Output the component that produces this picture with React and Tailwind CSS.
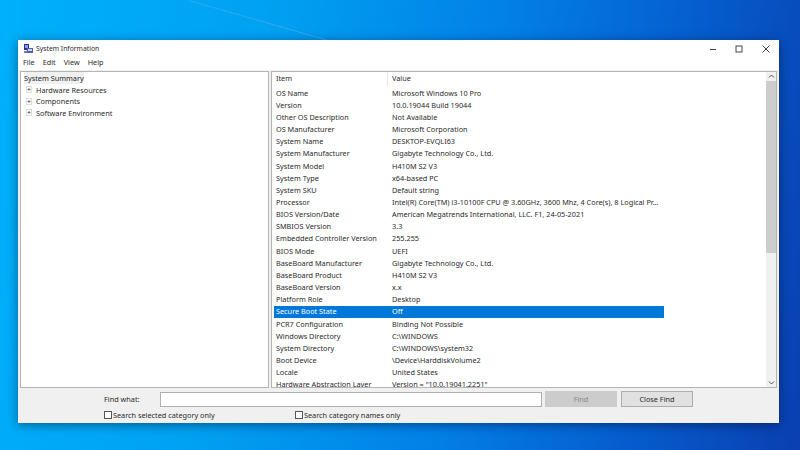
import React from "react";

const rows = [
  ["OS Name", "Microsoft Windows 10 Pro"],
  ["Version", "10.0.19044 Build 19044"],
  ["Other OS Description", "Not Available"],
  ["OS Manufacturer", "Microsoft Corporation"],
  ["System Name", "DESKTOP-EVQLI63"],
  ["System Manufacturer", "Gigabyte Technology Co., Ltd."],
  ["System Model", "H410M S2 V3"],
  ["System Type", "x64-based PC"],
  ["System SKU", "Default string"],
  ["Processor", "Intel(R) Core(TM) i3-10100F CPU @ 3.60GHz, 3600 Mhz, 4 Core(s), 8 Logical Pr..."],
  ["BIOS Version/Date", "American Megatrends International, LLC. F1, 24-05-2021"],
  ["SMBIOS Version", "3.3"],
  ["Embedded Controller Version", "255.255"],
  ["BIOS Mode", "UEFI"],
  ["BaseBoard Manufacturer", "Gigabyte Technology Co., Ltd."],
  ["BaseBoard Product", "H410M S2 V3"],
  ["BaseBoard Version", "x.x"],
  ["Platform Role", "Desktop"],
  ["Secure Boot State", "Off"],
  ["PCR7 Configuration", "Binding Not Possible"],
  ["Windows Directory", "C:\\WINDOWS"],
  ["System Directory", "C:\\WINDOWS\\system32"],
  ["Boot Device", "\\Device\\HarddiskVolume2"],
  ["Locale", "United States"],
  ["Hardware Abstraction Layer", 'Version = "10.0.19041.2251"'],
];

function Plus() {
  return (
    <svg width="6" height="7" viewBox="0 0 6 7" className="shrink-0">
      <rect x="0.5" y="0.5" width="5" height="6" fill="#fff" stroke="#b8b8b8" strokeDasharray="1 1" />
      <path d="M1.5 3.5H4.5M3 2V5" stroke="#777" />
    </svg>
  );
}

function Logo() {
  return (
    <svg width="9" height="10" viewBox="0 0 9 10" className="shrink-0">
      <rect x="0" y="0" width="5" height="6" fill="#27358f" />
      <rect x="1" y="1" width="3" height="3" fill="#8f9ddc" />
      <rect x="3" y="4" width="6" height="5" fill="#4f5fb8" />
      <rect x="4" y="5" width="4" height="2" fill="#cfd6f2" />
      <rect x="0" y="7" width="3" height="2" fill="#7a7a9a" />
    </svg>
  );
}

function Check({ label }) {
  return (
    <div className="flex items-center gap-[1px] whitespace-nowrap">
      <div className="w-[8px] h-[8px] border border-[#555] bg-white" />
      <span>{label}</span>
    </div>
  );
}

export default function App() {
  return (
    <div
      className="relative w-[800px] h-[450px] overflow-hidden pt-[40px] pl-[18px] text-[7.3px] leading-[12px] text-[#2a2a2a]"
      style={{ fontFamily: '"Noto Sans", "Open Sans", sans-serif' }}
    >
      <div className="absolute inset-0 bg-[linear-gradient(100deg,#00b0fa_0%,#00a2f2_30%,#0280e6_58%,#0560d0_78%,#0a3fb0_100%)]" />
      <div className="absolute left-[189px] top-0 w-[143px] h-[1px] bg-[#2fa8ee] rotate-[16deg] origin-left" />

      <div className="relative w-[761px] h-[383px] bg-[#f0f0f0] flex flex-col shadow-[0_2px_10px_rgba(0,0,40,0.45)]">
        <div className="bg-white h-[30px] shrink-0 flex flex-col">
          <div className="h-[16px] flex items-center pl-[6px] pt-[1px]">
            <Logo />
            <span className="ml-[3px] text-[6.8px]">System Information</span>
            <div className="ml-auto flex items-center">
              <svg width="10" height="10" viewBox="0 0 10 10" className="mr-[16px]">
                <path d="M2 5.5H8" stroke="#444" strokeWidth="1" />
              </svg>
              <svg width="10" height="10" viewBox="0 0 10 10" className="mr-[17px]">
                <rect x="2" y="2" width="6" height="6" fill="none" stroke="#444" strokeWidth="1" />
              </svg>
              <svg width="10" height="10" viewBox="0 0 10 10" className="mr-[8px]">
                <path d="M1.5 1.5L8.5 8.5M8.5 1.5L1.5 8.5" stroke="#444" strokeWidth="1" />
              </svg>
            </div>
          </div>
          <div className="flex gap-[8px] pl-[5px]">
            <span>File</span>
            <span>Edit</span>
            <span>View</span>
            <span>Help</span>
          </div>
        </div>

        <div className="h-[318px] shrink-0 flex gap-[2px] px-[2px] pt-[1px] bg-[#f0f0f0]">
          <div className="w-[249px] border border-[#b4b4b4] bg-white pl-[3px]">
            <div className="h-[12px] w-[60px] bg-[#f0f0f0] flex items-center whitespace-nowrap">System Summary</div>
            <div className="flex items-center gap-[4px] h-[11.5px] pl-[2px]"><Plus /><span>Hardware Resources</span></div>
            <div className="flex items-center gap-[4px] h-[11.5px] pl-[2px]"><Plus /><span>Components</span></div>
            <div className="flex items-center gap-[4px] h-[11.5px] pl-[2px]"><Plus /><span>Software Environment</span></div>
          </div>

          <div className="flex-1 border border-[#b4b4b4] bg-white flex overflow-hidden">
            <div className="flex-1 overflow-hidden pl-[2px]">
              <div className="flex h-[14px] mb-[1.5px]">
                <span className="w-[113px] pl-[2px] h-full">Item</span>
                <div className="w-[1px] h-full bg-[#e6e6e6]" />
                <span className="pl-[4px] h-full">Value</span>
              </div>
              {rows.map(([k, v]) => {
                const sel = k === "Secure Boot State";
                return (
                  <div
                    key={k}
                    className={
                      "flex h-[12.17px] w-[390px] items-center whitespace-nowrap pb-[2px] " +
                      (sel ? "bg-[#0078d7] text-white" : "")
                    }
                  >
                    <span className="w-[118px] pl-[2px] shrink-0">{k}</span>
                    <span>{v}</span>
                  </div>
                );
              })}
            </div>
            <div className="w-[10px] shrink-0 bg-[#f0f0f0] flex flex-col items-center">
              <svg width="9" height="9" viewBox="0 0 9 9" className="shrink-0">
                <path d="M2 5.5L4.5 3L7 5.5" fill="none" stroke="#555" strokeWidth="1" />
              </svg>
              <div className="w-full h-[172px] bg-[#cdcdcd]" />
              <svg width="9" height="9" viewBox="0 0 9 9" className="shrink-0 mt-auto">
                <path d="M2 3.5L4.5 6L7 3.5" fill="none" stroke="#555" strokeWidth="1" />
              </svg>
            </div>
          </div>
        </div>

        <div className="flex-1 relative pl-[86px] pt-[3px]">
          <div className="flex items-center h-[16px]">
            <span className="w-[56px] shrink-0">Find what:</span>
            <div className="w-[382px] h-[15px] border border-[#b0b0b0] bg-white shrink-0" />
            <div className="ml-[3px] w-[72px] h-[16px] bg-[#cccccc] text-[#8a8a8a] flex items-center justify-center shrink-0">Find</div>
            <div className="ml-[4px] w-[72px] h-[16px] bg-[#e1e1e1] border border-[#adadad] flex items-center justify-center shrink-0">Close Find</div>
          </div>
          <div className="flex mt-[1px] h-[14px] items-center">
            <div className="w-[191px]"><Check label="Search selected category only" /></div>
            <Check label="Search category names only" />
          </div>
        </div>
      </div>
    </div>
  );
}
